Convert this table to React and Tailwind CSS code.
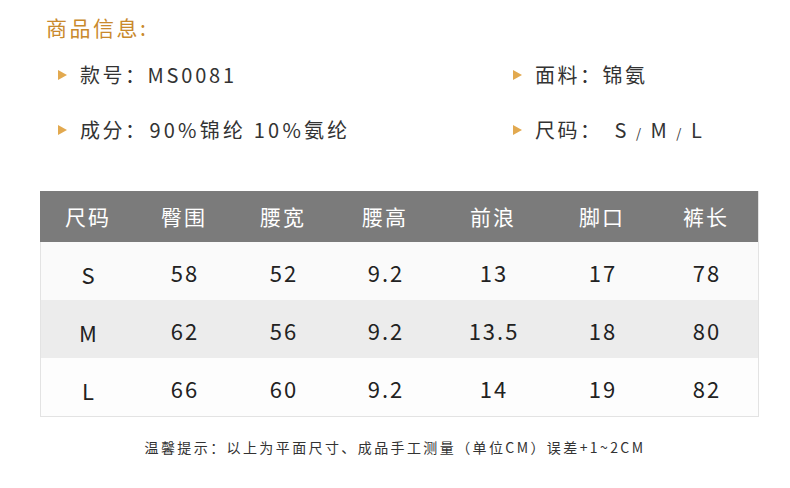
const cols = "grid grid-cols-[96px_96px_102px_102px_114px_104px_104px]";

const headers = ["尺码", "臀围", "腰宽", "腰高", "前浪", "脚口", "裤长"];
const rows = [
  { bg: "bg-[#fafafa]", cells: ["S", "58", "52", "9.2", "13", "17", "78"] },
  { bg: "bg-[#ececec]", cells: ["M", "62", "56", "9.2", "13.5", "18", "80"] },
  { bg: "bg-[#fdfdfd]", cells: ["L", "66", "60", "9.2", "14", "19", "82"] },
];

function Item({ label, value }) {
  return (
    <div className="flex items-center h-[28px]">
      <span className="w-0 h-0 border-y-[5px] border-y-transparent border-l-[9px] border-l-[#e2a94f] mr-[13px]" />
      <span>{label}</span>
      {value}
    </div>
  );
}

export default function App() {
  const font = { fontFamily: '"Noto Sans CJK SC", "Noto Sans", sans-serif' };
  return (
    <div className="w-[790px] h-[488px] bg-white text-[#333]" style={font}>
      <div className="pt-[12px] pl-[46px] text-[21px] leading-[30px] text-[#c9892c] tracking-[2.5px]">
        商品信息:
      </div>
      <div className="grid grid-cols-[455px_1fr] pl-[58px] text-[20px] tracking-[2.5px] gap-y-[27px] mt-[19px]">
        <Item label="款号：" value={<span className="tracking-[2.8px]">MS0081</span>} />
        <Item label="面料：" value={<span>锦氨</span>} />
        <Item label="成分：" value={<span className="ml-[2px] tracking-[3.2px]">90%锦纶 10%氨纶</span>} />
        <Item
          label="尺码："
          value={
            <span className="ml-[12px] flex items-center gap-[7px]">
              <span>S</span>
              <span className="text-[13px] mt-[6px]">/</span>
              <span>M</span>
              <span className="text-[13px] mt-[6px]">/</span>
              <span>L</span>
            </span>
          }
        />
      </div>

      <div className="mx-[40px] mt-[47px] w-[719px] border-r border-[#e3e3e3]">
        <div className={`${cols} bg-[#7b7b7b] text-white text-[21px] tracking-[2px] h-[51px] items-center`}>
          {headers.map((h) => (
            <div key={h} className="text-center">{h}</div>
          ))}
        </div>
        <div className="border-l border-b border-[#e3e3e3]">
          {rows.map((r) => (
            <div key={r.cells[0]} className={`${cols} ${r.bg} h-[58px] items-center text-[22px] tracking-[2px] text-[#222]`}>
              {r.cells.map((c, i) => (
                <div key={i} className={i === 0 ? "text-center mt-[6px]" : "text-center mt-[2px]"}>{c}</div>
              ))}
            </div>
          ))}
        </div>
      </div>

      <div className="text-center text-[14px] mt-[20px] text-[#333] tracking-[2.4px]">
        温馨提示：以上为平面尺寸、成品手工测量（单位CM）误差+1~2CM
      </div>
    </div>
  );
}
